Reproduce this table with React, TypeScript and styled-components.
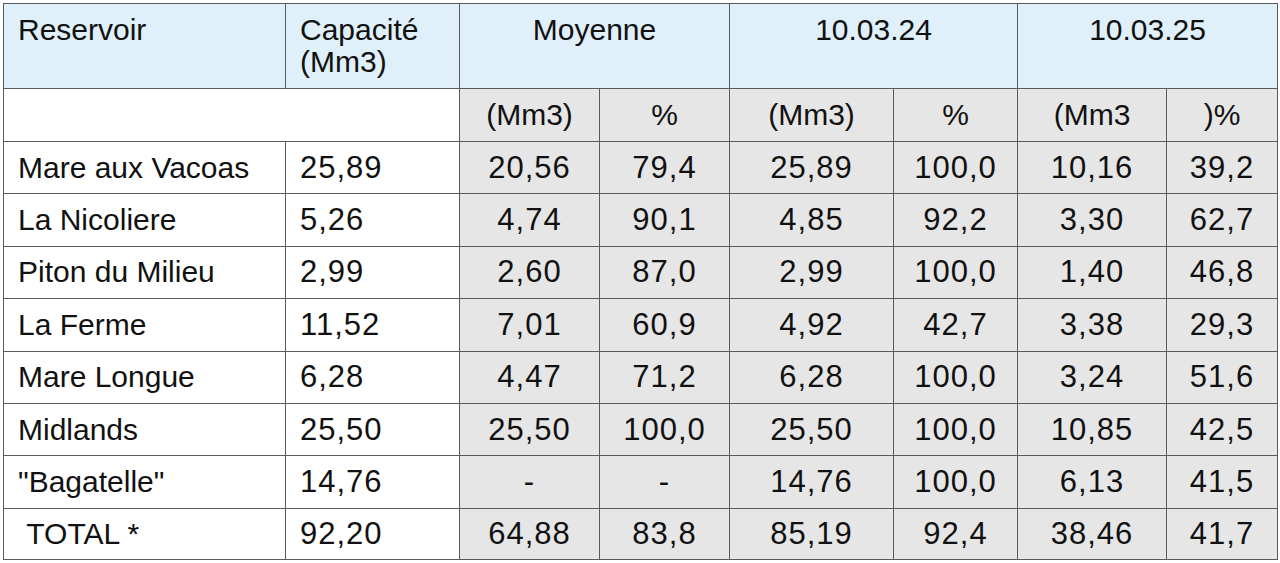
import { createGlobalStyle } from "styled-components";
import styled from "styled-components";

const GlobalStyle = createGlobalStyle`
  html, body {
    margin: 0;
    padding: 0;
    background: #ffffff;
  }
  body {
    font-family: "Liberation Sans", Arial, sans-serif;
    color: #111;
  }
`;

interface RowData {
  name: string;
  capacity: string;
  values: string[];
}

const rows: RowData[] = [
  { name: "Mare aux Vacoas", capacity: "25,89", values: ["20,56", "79,4", "25,89", "100,0", "10,16", "39,2"] },
  { name: "La Nicoliere", capacity: "5,26", values: ["4,74", "90,1", "4,85", "92,2", "3,30", "62,7"] },
  { name: "Piton du Milieu", capacity: "2,99", values: ["2,60", "87,0", "2,99", "100,0", "1,40", "46,8"] },
  { name: "La Ferme", capacity: "11,52", values: ["7,01", "60,9", "4,92", "42,7", "3,38", "29,3"] },
  { name: "Mare Longue", capacity: "6,28", values: ["4,47", "71,2", "6,28", "100,0", "3,24", "51,6"] },
  { name: "Midlands", capacity: "25,50", values: ["25,50", "100,0", "25,50", "100,0", "10,85", "42,5"] },
  { name: "\"Bagatelle\"", capacity: "14,76", values: ["-", "-", "14,76", "100,0", "6,13", "41,5"] },
  { name: "\u00a0TOTAL *", capacity: "92,20", values: ["64,88", "83,8", "85,19", "92,4", "38,46", "41,7"] },
];

const widths = [282, 174, 140, 130, 164, 124, 149, 111];

const Wrap = styled.div`
  padding: 3px 0 0 3px;
`;

const Table = styled.table`
  border-collapse: collapse;
  table-layout: fixed;
  width: 1274px;
  font-size: 30px;
`;

const HeadRow = styled.tr`
  height: 85px;
`;

const HeadCell = styled.th<{ $center?: boolean }>`
  box-sizing: border-box;
  height: 85px;
  background: #e0f0fa;
  border: 1px solid #5a5a5a;
  font-weight: normal;
  text-align: ${(p) => (p.$center ? "center" : "left")};
  vertical-align: top;
  padding: 10px 14px 0;
  line-height: 32px;
`;

const SubRow = styled.tr`
  height: 53px;
`;

const BlankCell = styled.td`
  background: #ffffff;
  border: 1px solid #5a5a5a;
`;

const UnitCell = styled.td`
  background: #e6e6e6;
  border: 1px solid #5a5a5a;
  text-align: center;
  padding: 0;
`;

const DataRow = styled.tr<{ $last?: boolean }>`
  height: ${(p) => (p.$last ? "51px" : "52.4px")};
`;

const NameCell = styled.td`
  background: #ffffff;
  border: 1px solid #5a5a5a;
  padding: 0 14px;
  white-space: pre;
`;

const CapCell = styled.td`
  background: #ffffff;
  border: 1px solid #5a5a5a;
  padding: 0 14px;
  font-size: 31px;
  letter-spacing: 1px;
`;

const NumCell = styled.td`
  background: #e6e6e6;
  border: 1px solid #5a5a5a;
  text-align: center;
  padding: 0;
  font-size: 31px;
  letter-spacing: 1px;
`;

export default function App() {
  return (
    <>
      <GlobalStyle />
      <Wrap>
        <Table>
          <colgroup>
            {widths.map((w, i) => (
              <col key={i} style={{ width: w }} />
            ))}
          </colgroup>
          <thead>
            <HeadRow>
              <HeadCell>Reservoir</HeadCell>
              <HeadCell>
                Capacité
                <br />
                (Mm3)
              </HeadCell>
              <HeadCell colSpan={2} $center>
                Moyenne
              </HeadCell>
              <HeadCell colSpan={2} $center>
                10.03.24
              </HeadCell>
              <HeadCell colSpan={2} $center>
                10.03.25
              </HeadCell>
            </HeadRow>
          </thead>
          <tbody>
            <SubRow>
              <BlankCell colSpan={2} />
              <UnitCell>(Mm3)</UnitCell>
              <UnitCell>%</UnitCell>
              <UnitCell>(Mm3)</UnitCell>
              <UnitCell>%</UnitCell>
              <UnitCell>(Mm3</UnitCell>
              <UnitCell>)%</UnitCell>
            </SubRow>
            {rows.map((r, i) => (
              <DataRow key={r.name} $last={i === rows.length - 1}>
                <NameCell>{r.name}</NameCell>
                <CapCell>{r.capacity}</CapCell>
                {r.values.map((v, j) => (
                  <NumCell key={j}>{v}</NumCell>
                ))}
              </DataRow>
            ))}
          </tbody>
        </Table>
      </Wrap>
    </>
  );
}
